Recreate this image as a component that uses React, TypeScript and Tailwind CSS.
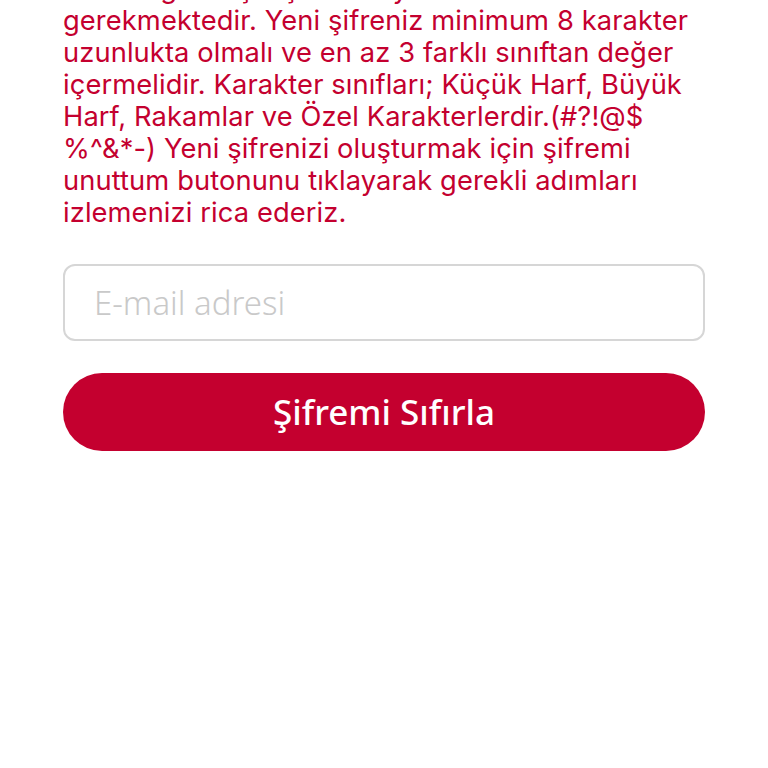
const lines = [
  'Güvenliğiniz için şifrenizi yenilemeniz',
  'gerekmektedir. Yeni şifreniz minimum 8 karakter',
  'uzunlukta olmalı ve en az 3 farklı sınıftan değer',
  'içermelidir. Karakter sınıfları; Küçük Harf, Büyük',
  'Harf, Rakamlar ve Özel Karakterlerdir.(#?!@$',
  '%^&*-) Yeni şifrenizi oluşturmak için şifremi',
  'unuttum butonunu tıklayarak gerekli adımları',
  'izlemenizi rica ederiz.',
];

export default function App() {
  return (
    <div className="w-[768px] h-[768px] overflow-hidden bg-white">
      <div className="px-[63px] -mt-[27px]">
        <p className="text-[27.3px] leading-[32px] text-[#c4002f] font-['Inter',sans-serif] tracking-[0.1px]">
          {lines.map((l, i) => (
            <span key={i} className="block whitespace-nowrap">{l}</span>
          ))}
        </p>

        <input
          type="email"
          placeholder="E-mail adresi"
          className="mt-[35px] w-full h-[77px] rounded-[12px] border-2 border-[#d6d6d6] px-[29px] text-[33px] font-light font-['Noto_Sans',sans-serif] placeholder:text-[#c9c9c9] outline-none"
        />

        <button className="mt-[32px] w-full h-[78px] rounded-full bg-[#c4002f] text-white text-[35px] font-medium font-['Noto_Sans',sans-serif]">
          Şifremi Sıfırla
        </button>
      </div>
    </div>
  );
}
